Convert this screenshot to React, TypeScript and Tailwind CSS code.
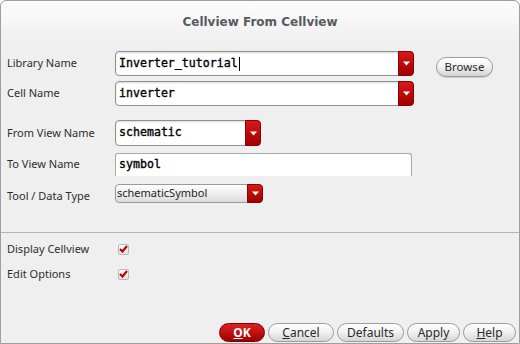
import React from 'react';

const RedArrow = ({ className }: { className: string }) => (
  <div
    className={`flex items-center justify-center bg-gradient-to-b from-[#d81818] to-[#a20000] border border-[#8c0000] ${className}`}
  >
    <svg width="7" height="5" viewBox="0 0 7 5">
      <path d="M0 0.5 H7 L3.5 4.5 Z" fill="#ffffff" />
    </svg>
  </div>
);

const ComboField = ({ value, width, caret }: { value: string; width: string; caret?: boolean }) => (
  <div className={`flex h-full ${width} rounded-[4px] border border-[#8f8f8f] bg-white shadow-[inset_0_1px_2px_rgba(0,0,0,0.15)]`}>
    <div className="flex flex-1 items-center pl-[3px] font-['DejaVu_Sans_Mono',monospace] text-[11.6px] text-black [-webkit-text-stroke:0.35px_#000]">
      {value}
      {caret && <span className="ml-[1px] inline-block h-[14px] w-px bg-black" />}
    </div>
    <RedArrow className="-my-px -mr-px w-[16px] rounded-r-[4px]" />
  </div>
);

const Label = ({ children }: { children: React.ReactNode }) => (
  <div className="w-[108px] shrink-0 text-[11px] text-[#2e2e2e]">{children}</div>
);

const Check = () => (
  <div className="ml-[3px] flex h-[11px] w-[11px] items-center justify-center rounded-[2px] border border-[#b8b8b8] bg-gradient-to-b from-white to-[#e2e2e2]">
    <svg width="9" height="8" viewBox="0 0 9 8">
      <path d="M1 4 L3.5 6.5 L8 1" stroke="#c00000" strokeWidth="2.2" fill="none" />
    </svg>
  </div>
);

const PillButton = ({ children, width }: { children: React.ReactNode; width: string }) => (
  <div
    className={`flex h-[19px] ${width} items-center justify-center rounded-full border border-[#9c9c9c] bg-gradient-to-b from-white via-[#f0f0f0] to-[#d6d6d6] text-[12px] text-[#2a2a2a]`}
  >
    {children}
  </div>
);

export default function App() {
  return (
    <div className="h-[344px] w-[520px] bg-white font-['Noto_Sans',sans-serif]">
      <div className="flex h-[344px] w-[520px] flex-col rounded-t-[6px] border border-[#9e9e9e] bg-[#efefef]">
        <div className="flex h-[41px] shrink-0 items-center justify-center rounded-t-[6px] bg-gradient-to-b from-[#fdfdfd] to-[#efefef] pt-px font-['DejaVu_Sans',sans-serif] text-[12px] font-bold text-[#555b5f]">
          Cellview From Cellview
        </div>

        <div className="flex flex-1 flex-col pl-[6px] pt-[9px]">
          <div className="flex h-[25px] items-center">
            <Label>Library Name</Label>
            <ComboField value="Inverter_tutorial" width="w-[299px]" caret />
            <div className="ml-[22px] mt-[7px] flex h-[20px] w-[57px] items-center justify-center rounded-full border border-[#9c9c9c] bg-gradient-to-b from-white via-[#f2f2f2] to-[#d2d2d2] text-[11.5px] text-[#2a2a2a] shadow-[0_1px_1px_rgba(0,0,0,0.15)]">
              Browse
            </div>
          </div>

          <div className="mt-[5px] flex h-[25px] items-center">
            <Label>Cell Name</Label>
            <ComboField value="inverter" width="w-[299px]" />
          </div>

          <div className="mt-[14px] flex h-[26px] items-center">
            <Label>From View Name</Label>
            <ComboField value="schematic" width="w-[146px]" />
          </div>

          <div className="mt-[7px] flex h-[23px] items-center">
            <Label>To View Name</Label>
            <div className="flex h-full w-[297px] items-center rounded-t-[3px] border-x border-t border-[#a8a8a8] bg-white pl-[3px] font-['DejaVu_Sans_Mono',monospace] text-[11.6px] text-black [-webkit-text-stroke:0.35px_#000]">
              symbol
            </div>
          </div>

          <div className="mt-[8px] flex h-[19px] items-center">
            <Label>
              <span className="relative top-[3px]">Tool / Data Type</span>
            </Label>
            <div className="flex h-full w-[148px] rounded-[4px] border border-[#9a9a9a] bg-gradient-to-b from-white to-[#dcdcdc]">
              <div className="flex flex-1 items-center pl-[1px] text-[11px] text-[#222]">schematicSymbol</div>
              <RedArrow className="-my-px -mr-px w-[16px] rounded-r-[4px]" />
            </div>
          </div>

          <div className="-ml-[6px] mt-[29px] border-t border-[#b4b4b4]" />

          <div className="mt-[8px] flex h-[16px] items-center">
            <Label>Display Cellview</Label>
            <Check />
          </div>
          <div className="mt-[9px] flex h-[16px] items-center">
            <Label>Edit Options</Label>
            <Check />
          </div>

          <div className="mt-auto mb-px flex justify-end gap-[3px] pr-[3px]">
            <div className="flex h-[19px] w-[46px] items-center justify-center rounded-full border border-[#7e0000] bg-gradient-to-b from-[#e02020] to-[#a00000] text-[12px] font-bold text-white">
              <span className="underline">O</span>K
            </div>
            <PillButton width="w-[66px]">
              <span className="underline">C</span>ancel
            </PillButton>
            <PillButton width="w-[67px]">Defaults</PillButton>
            <PillButton width="w-[53px]">Apply</PillButton>
            <PillButton width="w-[53px]">
              <span className="underline">H</span>elp
            </PillButton>
          </div>
        </div>
      </div>
    </div>
  );
}
